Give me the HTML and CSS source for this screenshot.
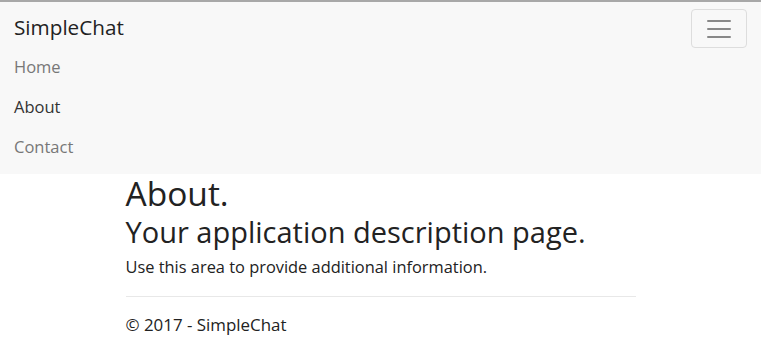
FILE: index.html
```html
<!DOCTYPE html>
<html lang="en">
<head>
    <meta charset="UTF-8">
    <meta name="viewport" content="width=device-width, initial-scale=1.0">
    <title>About - SimpleChat</title>
    <link rel="stylesheet" href="styles.css">
</head>
<body>
    <div class="navbar">
        <div class="navbar-header">
            <a class="navbar-brand" href="#">SimpleChat</a>
            <button type="button" class="navbar-toggle">
                <span class="icon-bar"></span>
                <span class="icon-bar"></span>
                <span class="icon-bar"></span>
            </button>
        </div>
        <ul class="nav">
            <li><a href="#">Home</a></li>
            <li class="active"><a href="#">About</a></li>
            <li><a href="#">Contact</a></li>
        </ul>
    </div>

    <div class="body-content">
        <h2>About.</h2>
        <h3>Your application description page.</h3>
        <p>Use this area to provide additional information.</p>
        <hr>
        <footer>
            <p>&copy; 2017 - SimpleChat</p>
        </footer>
    </div>
</body>
</html>
```

FILE: styles.css
```css
body {
    margin: 0;
    font-family: "Open Sans", "Noto Sans", sans-serif;
    font-size: 16.4px;
    color: #222;
    background-color: #fff;
}
a {
    text-decoration: none;
}
.navbar {
    background-color: #f8f8f8;
    border-top: 2px solid #a8a8a8;
    height: 172px;
}
.navbar-header {
    display: flex;
    justify-content: space-between;
    align-items: flex-start;
    height: 45px;
}
.navbar-brand {
    color: #222;
    font-size: 20.7px;
    line-height: 50px;
    padding-left: 14px;
}
.navbar-toggle {
    margin: 7px 14px 0 0;
    width: 56px;
    height: 39px;
    background: transparent;
    border: 1px solid #ddd;
    border-radius: 4px;
    display: flex;
    flex-direction: column;
    align-items: center;
    justify-content: center;
    gap: 6px;
    padding: 0;
}
.icon-bar {
    display: block;
    width: 24px;
    height: 2px;
    background-color: #888;
    border-radius: 1px;
}
.nav {
    list-style: none;
    margin: 0;
    padding: 0;
}
.nav li a {
    display: block;
    padding-left: 14px;
    line-height: 40px;
    color: #777;
    font-size: 16.5px;
}
.nav li.active a {
    color: #333;
}
.body-content {
    max-width: 510px;
    margin: 0 auto;
}
h2 {
    font-size: 33.5px;
    font-weight: normal;
    margin: 0;
    line-height: 38px;
    color: #222;
}
h3 {
    font-size: 29px;
    font-weight: normal;
    margin: 0;
    line-height: 40px;
    color: #222;
}
p {
    margin: 0;
    line-height: 30px;
}
hr {
    border: 0;
    border-top: 1px solid #e8e8e8;
    margin: 14px 0 13px;
}
footer p {
    font-size: 16.9px;
}
```
